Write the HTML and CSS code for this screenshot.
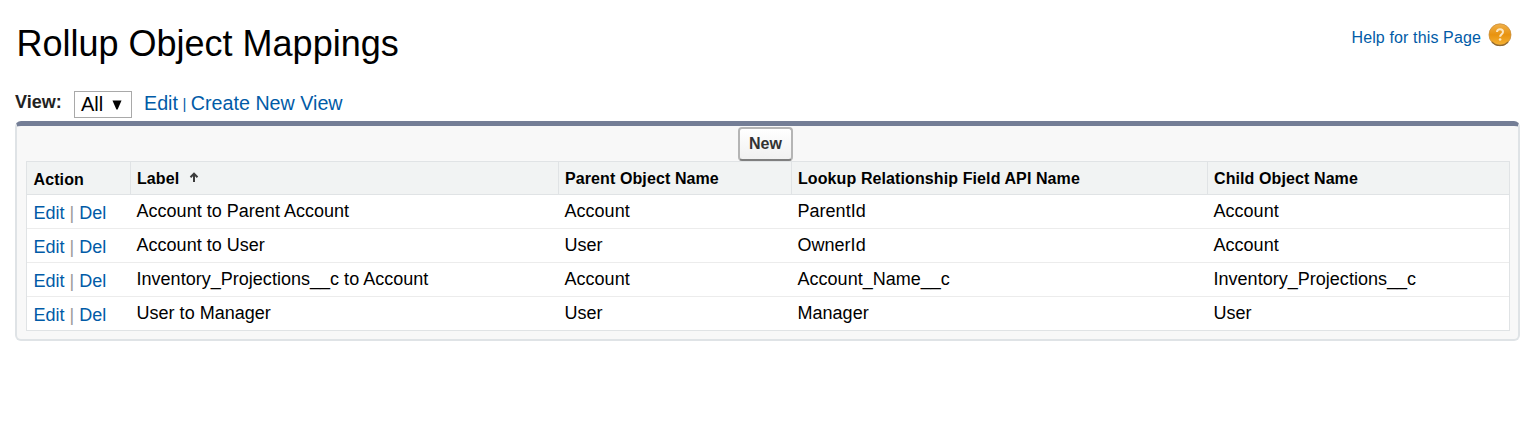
FILE: index.html
```html
<!DOCTYPE html>
<html lang="en">
<head>
<meta charset="utf-8">
<title>Rollup Object Mappings</title>
<link rel="stylesheet" href="styles.css">
</head>
<body>
<header class="page-header">
  <h1 class="title">Rollup Object Mappings</h1>
  <a class="help"><span class="help-text">Help for this Page</span>
    <svg class="help-icon" width="24" height="24" viewBox="0 0 24 24">
      <defs>
        <linearGradient id="orb" x1="0" y1="0" x2="0" y2="1"><stop offset="0" stop-color="#f0b04a"/><stop offset=".5" stop-color="#e8930f"/><stop offset="1" stop-color="#f7b436"/></linearGradient>
      </defs>
      <circle cx="12" cy="11.8" r="11" fill="url(#orb)" stroke="#c98f3e" stroke-width=".8"/>
      <path d="M4 19a11 11 0 0 0 16 0" fill="none" stroke="#8f6a35" stroke-width="1.3"/>
      <path d="M9 9C9.1 7.1 10.3 6.3 12 6.3c1.9 0 3 1.1 3 2.7 0 2.2-2.9 2.4-2.9 4.8" fill="none" stroke="#fbe6c0" stroke-width="2"/>
      <circle cx="12.1" cy="16.5" r="1.3" fill="#fbe6c0"/>
    </svg></a>
</header>
<div class="view-bar">
  <span class="view-label">View:</span>
  <span class="select"><span>All</span><svg width="10" height="10" viewBox="0 0 10 10"><path d="M.5 .5h9L5.6 9.5H4.4z" fill="#000"/></svg></span>
  <nav class="view-links"><a>Edit</a><span class="bar">|</span><a>Create New View</a></nav>
</div>
<main class="panel">
  <div class="toolbar"><button class="new-button">New</button></div>
  <table class="list">
    <colgroup><col class="c-action"><col class="c-label"><col class="c-parent"><col class="c-lookup"><col class="c-child"></colgroup>
    <thead><tr><th class="action">Action</th><th><span class="t-label">Label</span><svg class="sort" width="10" height="11" viewBox="0 0 10 11"><path d="M5 10V2M1.5 5.2L5 1.7l3.5 3.5" fill="none" stroke="#3c3c3c" stroke-width="2"/></svg></th><th>Parent Object Name</th><th>Lookup Relationship Field API Name</th><th>Child Object Name</th></tr></thead>
    <tbody>
      <tr><td class="action"><a>Edit</a><i>|</i><a>Del</a></td><td>Account to Parent Account</td><td>Account</td><td>ParentId</td><td>Account</td></tr>
      <tr><td class="action"><a>Edit</a><i>|</i><a>Del</a></td><td>Account to User</td><td>User</td><td>OwnerId</td><td>Account</td></tr>
      <tr><td class="action"><a>Edit</a><i>|</i><a>Del</a></td><td>Inventory_Projections__c to Account</td><td>Account</td><td>Account_Name__c</td><td>Inventory_Projections__c</td></tr>
      <tr><td class="action"><a>Edit</a><i>|</i><a>Del</a></td><td>User to Manager</td><td>User</td><td>Manager</td><td>User</td></tr>
    </tbody>
  </table>
</main>
</body>
</html>
```
FILE: styles.css
```css
* { box-sizing: border-box; }
body {
  margin: 0;
  padding: 0 7px 0 15px;
  background: #fff;
  color: #000;
  font-family: "Liberation Sans", Arial, sans-serif;
}
a { color: #015ba7; }
.page-header {
  display: flex;
  justify-content: space-between;
  height: 91px;
  padding: 23px 8px 0 1.5px;
}
.title {
  margin: 0;
  font-size: 36px;
  font-weight: 400;
  line-height: 42px;
  white-space: nowrap;
}
.help { display: flex; align-items: flex-start; }
.help-text { margin: 5px 7px 0 0; font-size: 16px; line-height: 20px; letter-spacing: .13px; }
.view-bar { display: flex; align-items: flex-start; height: 30px; }
.view-label {
  width: 59px;
  font-size: 18px;
  font-weight: 700;
  line-height: 22px;
  color: #222;
}
.select {
  display: flex;
  align-items: center;
  justify-content: space-between;
  width: 58px;
  height: 27px;
  padding: 0 9px 0 6px;
  border: 1px solid #a9a9a9;
  font-size: 20px;
}
.view-links { padding-left: 12px; font-size: 19.7px; line-height: 24px; color: #015ba7; white-space: nowrap; }
.bar { margin: 0 4.5px; font-size: 15px; vertical-align: 1px; }
.panel {
  height: 220px;
  padding: 0 8px 0 9px;
  border: 2px solid #dfe3e6;
  border-top: 5px solid #747e96;
  border-radius: 6px;
  background: #f8f8f8;
}
.toolbar { display: flex; justify-content: center; height: 35px; padding-top: 1px; padding-right: 5px; }
.new-button {
  width: 55px;
  height: 34px;
  padding: 0 0 1px;
  border: 2px solid #b5b5b5;
  border-bottom-color: #7f7f7f;
  border-radius: 4px;
  background: linear-gradient(#fff, #f1f1f1);
  color: #333;
  font: 700 16px "Liberation Sans", Arial, sans-serif;
}
.list {
  width: 1484px;
  table-layout: fixed;
  border-collapse: separate;
  border-spacing: 0;
  border: 1px solid #e0e3e5;
  background: #fff;
}
.c-action { width: 103px; }
.c-label { width: 428px; }
.c-parent { width: 233px; }
.c-lookup { width: 416px; }
th, td { padding: 0; text-align: left; vertical-align: top; white-space: nowrap; }
th {
  height: 33px;
  padding: 7px 0 0 6px;
  border-bottom: 1px solid #e0e3e5;
  border-left: 1px solid #e0e3e5;
  background: #f1f3f3;
  font-size: 16px;
  line-height: 20px;
  letter-spacing: .1px;
}
th.action { padding: 8px 0 0 6.5px; border-left: 0; }
.sort { margin-left: 10px; vertical-align: 1px; }
td {
  height: 34px;
  padding: 5px 0 0 6.5px;
  border-bottom: 1px solid #ececec;
  font-size: 18px;
  line-height: 22px;
  letter-spacing: .02px;
}
td.action { padding-top: 7px; }
tr:last-child td { height: 33px; border-bottom: 0; }
td i { margin: 0 5px; color: #999; font-style: normal; }
```
